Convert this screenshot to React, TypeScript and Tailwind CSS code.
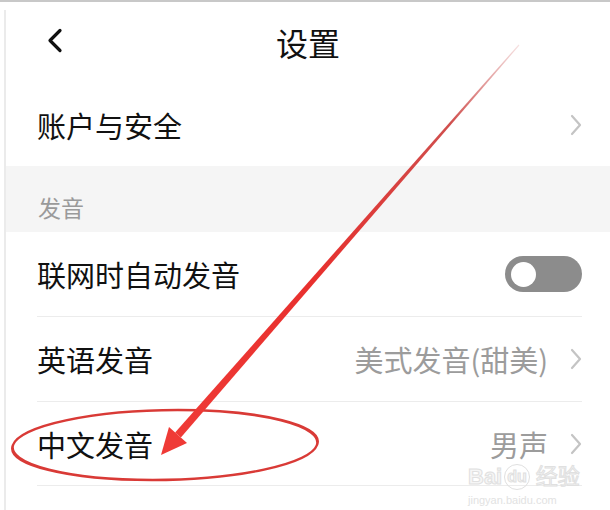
import React from 'react';

const FONT = "font-['Noto_Sans_CJK_SC','Noto_Sans',sans-serif]";

function Chevron() {
  return (
    <svg width="12" height="22" viewBox="0 0 12 22" className="shrink-0">
      <path d="M2 2 L10 11 L2 20" fill="none" stroke="#c4c4c4" strokeWidth="2.2" strokeLinecap="round" strokeLinejoin="round" />
    </svg>
  );
}

function Row({ label, value, right, last }: { label: string; value?: string; right?: React.ReactNode; last?: boolean }) {
  return (
    <div className={`ml-[31px] mr-[28px] flex items-center justify-between ${last ? 'h-[84px]' : 'h-[85px]'} border-b border-[#ececec]`}>
      <span className="text-[29px] leading-[36px] text-[#111]">{label}</span>
      <div className="flex items-center gap-[22px]">
        {value && <span className="text-[29px] leading-[36px] text-[#9c9c9c]">{value}</span>}
        {right}
      </div>
    </div>
  );
}

export default function App() {
  return (
    <div className={`relative w-[610px] h-[510px] overflow-hidden bg-white border-t-2 border-[#c8c8c8] pl-[4px] ${FONT}`}>
      <div className="mt-[8px] h-full border-l-2 border-[#ebebeb]">
        {/* header */}
        <div className="relative h-[74px] pb-[10px] flex items-center justify-center">
          <svg width="16" height="26" viewBox="0 0 16 26" className="absolute left-[41px] top-[18px]">
            <path d="M13 2.5 L3 12.5 L13 22.5" fill="none" stroke="#111" strokeWidth="3.2" strokeLinecap="round" strokeLinejoin="round" />
          </svg>
          <span className="text-[32px] leading-[40px] text-[#111]">设置</span>
        </div>

        <div className="ml-[31px] mr-[28px] h-[82px] flex items-center justify-between">
          <span className="text-[29px] leading-[36px] text-[#111]">账户与安全</span>
          <Chevron />
        </div>

        <div className="h-[66px] bg-[#f5f5f5] pl-[32px] pt-[27px]">
          <span className="text-[23px] leading-[28px] text-[#9a9a9a]">发音</span>
        </div>

        <Row
          label="联网时自动发音"
          right={
            <div className="w-[77px] h-[36px] rounded-full bg-[#8c8c8c] flex items-center pl-[6px]">
              <div className="w-[25px] h-[25px] rounded-full bg-white" />
            </div>
          }
        />
        <Row label="英语发音" value="美式发音(甜美)" right={<Chevron />} />
        <Row label="中文发音" value="男声" right={<Chevron />} last />
      </div>

      {/* watermark */}
      <div className="absolute left-[468px] top-[462px] flex flex-col items-start pointer-events-none">
        <div className="flex items-center gap-[2px] text-[22px] leading-[24px] font-bold text-[#f6f6f6] [-webkit-text-stroke:1px_#e0e0e0] font-['Liberation_Sans','Noto_Sans_CJK_SC',sans-serif]">
          <span>Bai</span>
          <span className="text-[16px] rounded-full border border-[#e0e0e0] px-[2px]">du</span>
          <span className="ml-[4px] font-normal">经验</span>
        </div>
        <span className="text-[11px] leading-[14px] mt-[3px] text-[#e2e2e2] font-['Liberation_Sans',sans-serif]">jingyan.baidu.com</span>
      </div>

      {/* red annotation */}
      <svg className="absolute left-0 top-0 pointer-events-none" width="610" height="510" viewBox="0 0 610 510">
        <defs>
          <linearGradient id="shaft" x1="519" y1="43" x2="178" y2="433" gradientUnits="userSpaceOnUse">
            <stop offset="0" stopColor="#c23a3a" stopOpacity="0.15" />
            <stop offset="0.2" stopColor="#c8302e" stopOpacity="0.85" />
            <stop offset="0.6" stopColor="#e8302e" />
            <stop offset="1" stopColor="#ef3a36" />
          </linearGradient>
        </defs>
        <ellipse
          cx="0"
          cy="0"
          rx="152"
          ry="35"
          fill="none"
          stroke="#d93a36"
          strokeWidth="2.6"
          transform="translate(165 443) skewX(-20)"
        />
        <polygon points="519.4,43.4 180.9,435.5 175.1,430.5 518.6,42.6" fill="url(#shaft)" />
        <polygon points="161,453 187,441 169,425" fill="#ef3a36" />
      </svg>
    </div>
  );
}
